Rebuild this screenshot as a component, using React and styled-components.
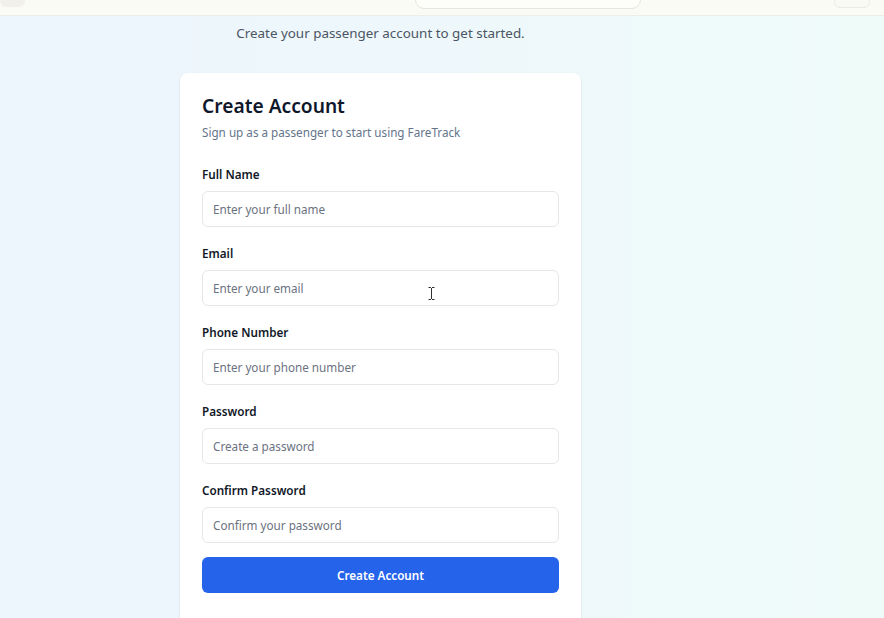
import React from 'react';
import styled, { createGlobalStyle } from 'styled-components';

const GlobalStyle = createGlobalStyle`
    html, body {
        margin: 0;
        padding: 0;
        height: 100%;
        overflow: hidden;
    }
    body {
        font-family: "Noto Sans", "Open Sans", sans-serif;
        background: linear-gradient(90deg, #edf5fd 0%, #eef8fb 55%, #effbf9 100%);
    }
`;

const TopBar = styled.div`
    display: flex;
    align-items: flex-start;
    height: 15px;
    overflow: hidden;
    background: #fbfbf6;
    border-bottom: 1px solid #efeee6;
    > .left {
        width: 25px;
        height: 26px;
        margin-top: -19px;
        border-radius: 6px;
        background: #f1f0ea;
    }
    > .search {
        width: 224px;
        height: 26px;
        margin: -19px 0 0 390px;
        border: 1px solid #e6e5de;
        border-radius: 9px;
        background: #fdfdf9;
    }
    > .right {
        width: 34px;
        height: 26px;
        margin: -20px 14px 0 auto;
        border: 1px solid #ebeae3;
        border-radius: 6px;
        background: #fafaf5;
    }
`;

const Column = styled.main`
    width: 401px;
    margin-left: 180px;
    display: flex;
    flex-direction: column;
    align-items: center;
`;

const Intro = styled.p`
    margin: 6px 0 0;
    font-size: 13.4px;
    line-height: 22px;
    color: #4b5563;
`;

const Card = styled.div`
    position: relative;
    align-self: stretch;
    margin-top: 29px;
    padding: 20px 22px 40px;
    background: #ffffff;
    border-radius: 8px;
    box-shadow: 0 1px 3px rgba(15, 23, 42, 0.08), 0 1px 2px rgba(15, 23, 42, 0.04);
`;

const Title = styled.h1`
    margin: 0;
    font-size: 19.2px;
    line-height: 26px;
    font-weight: 600;
    color: #0f172a;
`;

const Subtitle = styled.p`
    margin: 3px 0 0;
    font-size: 11.7px;
    line-height: 20px;
    color: #64748b;
`;

const Form = styled.form`
    display: flex;
    flex-direction: column;
    gap: 16px;
    margin-top: 22px;
`;

const Field = styled.div`
    display: flex;
    flex-direction: column;
    gap: 7px;
    > label {
        font-size: 11.7px;
        line-height: 20px;
        font-weight: 600;
        color: #111827;
    }
`;

const Input = styled.input`
    box-sizing: border-box;
    height: 36px;
    padding: 0 10px;
    border: 1px solid #e5e7eb;
    border-radius: 6px;
    background: #ffffff;
    font-family: inherit;
    font-size: 11.7px;
    color: #111827;
    outline: none;
    &::placeholder {
        color: #6b7280;
    }
`;

const Button = styled.button`
    height: 36px;
    margin-top: -2px;
    border: none;
    border-radius: 6px;
    background: #2563eb;
    color: #ffffff;
    font-family: inherit;
    font-size: 11.7px;
    font-weight: 600;
`;

const Cursor = styled.svg`
    position: absolute;
    left: 248px;
    top: 214px;
    width: 7px;
    height: 13px;
`;

const fields = [
    { label: 'Full Name', type: 'text', placeholder: 'Enter your full name' },
    { label: 'Email', type: 'email', placeholder: 'Enter your email' },
    { label: 'Phone Number', type: 'tel', placeholder: 'Enter your phone number' },
    { label: 'Password', type: 'password', placeholder: 'Create a password' },
    { label: 'Confirm Password', type: 'password', placeholder: 'Confirm your password' },
];

const App = () => (
    <>
        <GlobalStyle />
        <TopBar>
            <div className="left" />
            <div className="search" />
            <div className="right" />
        </TopBar>
        <Column>
            <Intro>Create your passenger account to get started.</Intro>
            <Card>
                <Title>Create Account</Title>
                <Subtitle>Sign up as a passenger to start using FareTrack</Subtitle>
                <Form onSubmit={(e) => e.preventDefault()}>
                    {fields.map((f) => (
                        <Field key={f.label}>
                            <label>{f.label}</label>
                            <Input type={f.type} placeholder={f.placeholder} />
                        </Field>
                    ))}
                    <Button type="submit">Create Account</Button>
                </Form>
                <Cursor viewBox="0 0 7 13">
                    <path d="M0.5 0.5h2.5M4 0.5h2.5M3.5 1v11M0.5 12.5h2.5M4 12.5h2.5" stroke="#333" strokeWidth="1" fill="none" />
                </Cursor>
            </Card>
        </Column>
    </>
);

export default App;
